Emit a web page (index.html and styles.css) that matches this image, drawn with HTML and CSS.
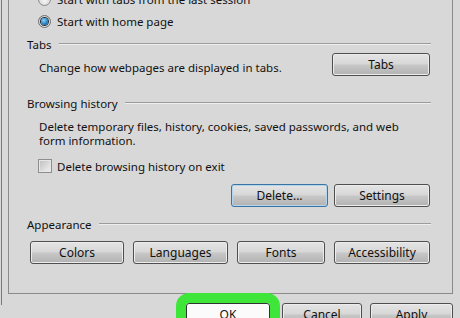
FILE: index.html
```html
<!DOCTYPE html>
<html lang="en">
<head>
  <meta charset="UTF-8" />
  <meta name="viewport" content="width=device-width, initial-scale=1.0"/>
  <title>Internet Options</title>
  <link rel="stylesheet" href="styles.css">
</head>
<body>
  <div class="dialog">
    <div class="panel">
      <div class="radio-row">
        <span class="radio"></span>
        <span>Start with tabs from the last session</span>
      </div>
      <div class="radio-row">
        <span class="radio checked"></span>
        <span>Start with home page</span>
      </div>

      <!-- Tabs -->
      <div class="group-title first"><span>Tabs</span><span class="rule"></span></div>
      <div class="tabs-row">
        <span class="desc">Change how webpages are displayed in tabs.</span>
        <button class="btn btn-tabs">Tabs</button>
      </div>

      <!-- Browsing history -->
      <div class="group-title history"><span>Browsing history</span><span class="rule"></span></div>
      <p class="history-desc">Delete temporary files, history, cookies, saved passwords, and web<br>form information.</p>
      <div class="check-row">
        <span class="checkbox"></span>
        <span>Delete browsing history on exit</span>
      </div>
      <div class="btn-row">
        <button class="btn btn-focus btn-delete">Delete...</button>
        <button class="btn btn-settings">Settings</button>
      </div>

      <!-- Appearance -->
      <div class="group-title"><span>Appearance</span><span class="rule"></span></div>
      <div class="appearance">
        <button class="btn">Colors</button>
        <button class="btn">Languages</button>
        <button class="btn">Fonts</button>
        <button class="btn">Accessibility</button>
      </div>
    </div>

    <div class="footer">
      <button class="btn btn-ok">OK</button>
      <button class="btn btn-cancel">Cancel</button>
      <button class="btn btn-apply">Apply</button>
    </div>
  </div>
</body>
</html>
```

FILE: styles.css
```css
:root {
  --face: #d8d8d8;
  --text: #111111;
  --edge: #8a8a8a;
}

* {
  box-sizing: border-box;
}

body {
  margin: 0;
  height: 318px;
  overflow: hidden;
  background: var(--face);
  font-family: 'Noto Sans', 'Open Sans', sans-serif;
  font-size: 11.5px;
  color: var(--text);
}

.dialog {
  margin-left: 1px;
  height: 100%;
  border-left: 1px solid #7a7a7a;
  padding: 0 7px 0 6px;
}

.panel {
  width: 445px;
  margin-top: -13px;
  padding: 0 22px 29px 18px;
  border: 1px solid var(--edge);
}

.radio-row {
  height: 22px;
  display: flex;
  align-items: center;
  padding-left: 11px;
}

.radio {
  width: 13px;
  height: 13px;
  margin-right: 6px;
  border-radius: 50%;
  border: 1px solid #8c8c8c;
  background: radial-gradient(circle at 50% 60%, #f6f6f6 0%, #d8d8d8 70%, #c4c4c4 100%);
  position: relative;
}

.radio.checked {
  border-color: #6e6e6e;
}

.radio.checked::after {
  content: "";
  position: absolute;
  left: 2px;
  top: 2px;
  width: 7px;
  height: 7px;
  border-radius: 50%;
  background: radial-gradient(circle at 40% 35%, #8ad4f6 0%, #2a86c4 55%, #0d3f66 100%);
  box-shadow: 0 0 0 1px #1d2f40;
}

.group-title {
  height: 16px;
  margin-top: 9px;
  display: flex;
  align-items: center;
}

.group-title.first {
  margin-top: 4px;
}

.group-title.history {
  margin-top: 19px;
}

.rule {
  flex: 1;
  height: 2px;
  margin: 0 -1px 0 7px;
  border-top: 1px solid #9c9c9c;
  border-bottom: 1px solid #eeeeee;
}

.tabs-row {
  margin-top: 1px;
  height: 23px;
  display: flex;
  justify-content: space-between;
  align-items: center;
  padding-left: 12px;
}

.desc {
  padding-top: 5px;
}

.history-desc {
  margin: 9px 0 0;
  padding-left: 12px;
  line-height: 14px;
}

.check-row {
  margin-top: 10px;
  height: 16px;
  display: flex;
  align-items: center;
  padding-left: 11px;
}

.checkbox {
  width: 14px;
  height: 14px;
  margin-right: 5px;
  border: 1px solid #8e8e8e;
  background: linear-gradient(135deg, #bdbdbd 0%, #dedede 60%, #f0f0f0 100%);
  box-shadow: inset 0 0 0 1px #e6e6e6;
}

.btn {
  height: 23px;
  padding: 0;
  font-family: inherit;
  font-size: 12px;
  color: var(--text);
  border: 1px solid #4f4f4f;
  border-radius: 3px;
  background: linear-gradient(to bottom, #e4e4e4 0%, #d8d8d8 45%, #c6c6c6 55%, #b2b2b2 100%);
  box-shadow: inset 0 0 0 1px #ececec;
}

.btn-tabs {
  width: 98px;
}

.btn-row {
  margin-top: 10px;
  display: flex;
  justify-content: flex-end;
  gap: 6px;
}

.btn-delete {
  width: 97px;
}

.btn-settings {
  width: 96px;
}

.btn-focus {
  border-color: #3b74a2;
  box-shadow: inset 0 0 0 1px #b4d6ec;
}

.appearance {
  margin-top: 9px;
  padding-left: 3px;
  display: grid;
  grid-template-columns: 94px 95px 88px 96px;
  column-gap: 9px;
}

.footer {
  margin-top: 9px;
  display: flex;
  justify-content: flex-end;
}

.btn-ok {
  width: 84px;
  background: #fbfbfb;
  border-color: #333333;
  box-shadow: none;
  outline: 10px solid #3ee63a;
}

.btn-cancel {
  width: 80px;
  margin-left: 12px;
}

.btn-apply {
  width: 83px;
  margin-left: 8px;
}
```
